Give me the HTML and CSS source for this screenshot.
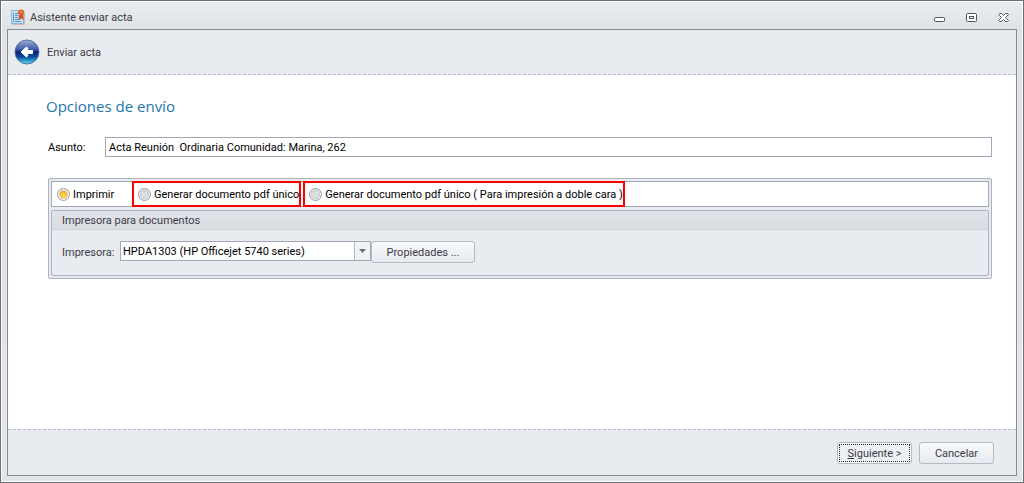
FILE: index.html
```html
<!DOCTYPE html>
<html lang="es">
<head>
    <meta charset="UTF-8">
    <meta name="viewport" content="width=device-width, initial-scale=1.0">
    <title>Asistente enviar acta</title>
    <link rel="stylesheet" href="styles.css">
</head>
<body>
    <div class="window">
        <header class="titlebar">
            <svg class="app-icon" width="14" height="16" viewBox="0 0 14 16">
                <rect x="0.5" y="1.5" width="12" height="13" fill="#c5e0f2" stroke="#8fb6d3"/>
                <path d="M1 15.500h12.500v-13" fill="none" stroke="#d8b9a4"/>
                <path d="M2.500 4v9M4 4.500h3M4 6.500h3M4 8.500h3M4 10.500h5M4 12.500h6" stroke="#5793bd"/>
                <path d="M8 6l-0.500 5 2.500-1.500 2.500 1.500-0.500-5z" fill="#d2532a"/>
                <circle cx="10" cy="3.500" r="3" fill="#e4622c"/>
                <circle cx="10" cy="3" r="1" fill="#f39a62"/>
            </svg>
            <h1>Asistente enviar acta</h1>
            <div class="window-buttons">
                <button type="button" aria-label="Minimizar">
                    <svg width="11" height="12" viewBox="0 0 11 12"><rect x="0.5" y="6.500" width="10" height="4" rx="1" fill="#fff" stroke="#50555d"/></svg>
                </button>
                <button type="button" aria-label="Maximizar">
                    <svg width="11" height="12" viewBox="0 0 11 12" fill="#fff" stroke="#50555d"><rect x="0.5" y="2.500" width="10" height="8" rx="1"/><rect x="3.500" y="5.500" width="4" height="2"/></svg>
                </button>
                <button type="button" aria-label="Cerrar">
                    <svg width="11" height="12" viewBox="0 0 11 12"><path d="M1.500 2.500h2l2 2 2-2h2l1 1-3 3 3 3-1 1h-2l-2-2-2 2h-2l-1-1 3-3-3-3z" fill="#fff" stroke="#50555d"/></svg>
                </button>
            </div>
        </header>

        <form class="wizard">
            <div class="wizard-header">
                <button type="button" class="back" aria-label="Volver">
                    <svg width="26" height="26" viewBox="0 0 26 26">
                        <defs>
                            <linearGradient id="ball" x1="0" y1="0" x2="0" y2="1">
                                <stop offset="0" stop-color="#a3b1d8"/>
                                <stop offset="0.4" stop-color="#3a58a6"/>
                                <stop offset="0.5" stop-color="#08206e"/>
                                <stop offset="0.7" stop-color="#0b4a9b"/>
                                <stop offset="1" stop-color="#4fe3f7"/>
                            </linearGradient>
                        </defs>
                        <circle cx="13" cy="13" r="12" fill="url(#ball)" stroke="#5a709b"/>
                        <path d="M7 13l5.500-5 1.500 1.500-1.500 2h6v3h-6l1.500 2-1.500 1.500z" fill="#fff" stroke="#fff" stroke-linejoin="round"/>
                    </svg>
                </button>
                <span>Enviar acta</span>
            </div>

            <main class="content">
                <h2>Opciones de envío</h2>
                <div class="subject">
                    <label for="asunto">Asunto:</label>
                    <input type="text" id="asunto" name="asunto" value="Acta Reunión  Ordinaria Comunidad: Marina, 262">
                </div>

                <div class="panel">
                    <div class="options">
                        <label class="option"><input type="radio" name="modo" checked>Imprimir</label>
                        <label class="option marked"><input type="radio" name="modo">Generar documento pdf único</label>
                        <label class="option marked"><input type="radio" name="modo">Generar documento pdf único ( Para impresión a doble cara )</label>
                    </div>
                    <section class="group">
                        <h3>Impresora para documentos</h3>
                        <div class="printer">
                            <label for="impresora">Impresora:</label>
                            <div class="combo">
                                <select id="impresora" name="impresora">
                                    <option>HPDA1303 (HP Officejet 5740 series)</option>
                                </select>
                                <svg class="arrow" width="16" height="18" viewBox="0 0 16 18"><path d="M0.500 0v18" stroke="#b5bac3"/><path d="M5 7h7l-3.500 4z" fill="#6a707b"/></svg>
                            </div>
                            <button type="button" class="btn properties">Propiedades ...</button>
                        </div>
                    </section>
                </div>
            </main>

            <footer class="actions">
                <button type="button" class="btn default"><span><u>S</u>iguiente &gt;</span></button>
                <button type="button" class="btn">Cancelar</button>
            </footer>
        </form>
    </div>
</body>
</html>
```
FILE: styles.css
```css
* {
    box-sizing: border-box;
}
body {
    margin: 0;
    font-family: Roboto, "Liberation Sans", sans-serif;
    font-size: 11px;
    line-height: 17px;
    color: #3b3b45;
}
h1, h2, h3 {
    margin: 0;
    font-size: 11px;
    font-weight: normal;
}
button, input, select {
    font: inherit;
    color: inherit;
}
svg {
    display: block;
}
.window {
    display: flex;
    flex-direction: column;
    min-height: 100vh;
    padding: 0 6px 6px;
    background: linear-gradient(#ebedf1, #dfe3e6 28px, #e3e6e9);
    border: 1px solid #696e78;
    box-shadow: inset 0 0 0 1px #fff;
}
.titlebar {
    display: flex;
    align-items: center;
    height: 28px;
    padding: 4px 8px 0 4px;
}
.titlebar h1 {
    flex: 1;
    margin-left: 5px;
}
.window-buttons {
    display: flex;
    gap: 21px;
}
.window-buttons button, .back {
    padding: 0;
    border: none;
    background: none;
}
.wizard {
    display: flex;
    flex: 1;
    flex-direction: column;
    background: #fff;
    border: 1px solid #868b94;
}
.wizard-header {
    display: flex;
    align-items: center;
    gap: 7px;
    height: 45px;
    padding: 0 6px;
    background: #e8ebf0;
    border-bottom: 1px dashed #b5bbc9;
}
.content {
    flex: 1;
    padding: 20px 24px 20px 40px;
    color: #000;
}
.content h2 {
    margin: 0 0 20px -2px;
    font-family: "Open Sans", sans-serif;
    font-size: 15px;
    line-height: 22px;
    color: #1e76ad;
}
.subject {
    display: flex;
    align-items: center;
}
.subject label {
    width: 57px;
}
.subject input {
    flex: 1;
    min-width: 0;
    height: 20px;
    padding: 0 3px;
    border: 1px solid #a3a8b4;
}
.panel {
    margin-top: 21px;
    padding: 2px;
    background: #e8ebf0;
    border: 1px solid #adb3bc;
    border-radius: 2px;
}
.options {
    display: flex;
    align-items: center;
    height: 26px;
    margin-bottom: 3px;
    background: #fff;
    border: 1px solid #a3a8b4;
}
.option {
    display: flex;
    align-items: center;
    gap: 3px;
    height: 26px;
    padding: 0 4px;
    white-space: nowrap;
}
.option:first-child {
    width: 80px;
    padding: 0 5px;
}
.option.marked {
    padding-right: 0;
    border: 2px solid #f00;
    margin-right: 2px;
}
.option input {
    appearance: none;
    width: 13px;
    height: 13px;
    margin: 0;
    border: 1px solid #9a9fa8;
    border-radius: 50%;
    background: #dedede;
    box-shadow: inset 0 0 0 1px #f4f4f4, inset 0 0 0 2px #c4c6c9;
}
.option input:checked {
    background: radial-gradient(circle at 50% 60%, #ffe850, #f0a020 5px);
    box-shadow: inset 0 0 0 1px #fff, inset 0 0 0 2px #dcc9a8;
}
.group {
    background: #e8ebf0;
    border: 1px solid #adb3bc;
    border-radius: 2px;
}
.group h3 {
    height: 19px;
    padding: 1px 10px 0;
    background: linear-gradient(#e0e4e8, #d9dde2);
    border-bottom: 1px solid #cfd3d9;
    color: #3b3b45;
}
.printer {
    display: flex;
    align-items: flex-start;
    padding: 11px 10px;
    color: #3b3b45;
}
.printer label {
    width: 58px;
    line-height: 23px;
}
.combo {
    position: relative;
    width: 251px;
    color: #000;
}
.combo select {
    display: block;
    appearance: none;
    width: 100%;
    height: 20px;
    padding: 1px 20px 0 2px;
    background: #fff;
    border: 1px solid #a3a8b4;
    border-radius: 0;
}
.arrow {
    position: absolute;
    top: 1px;
    right: 1px;
    background: #f0f2f5;
    pointer-events: none;
}
.btn {
    width: 75px;
    height: 22px;
    padding: 1px 0 0;
    background: linear-gradient(#f8fafc, #e6e9ee);
    border: 1px solid #b4b9c2;
    border-radius: 3px;
}
.btn.properties {
    width: 104px;
}
.btn.default {
    padding: 2px;
    background: #fff;
}
.btn.default span {
    display: block;
    height: 16px;
    background: #edf0f4;
    outline: 1px dotted #222;
}
.actions {
    display: flex;
    justify-content: flex-end;
    gap: 7px;
    height: 46px;
    padding: 12px 22px;
    background: #e8ebf0;
    border-top: 1px dashed #b5bbc9;
}
```
